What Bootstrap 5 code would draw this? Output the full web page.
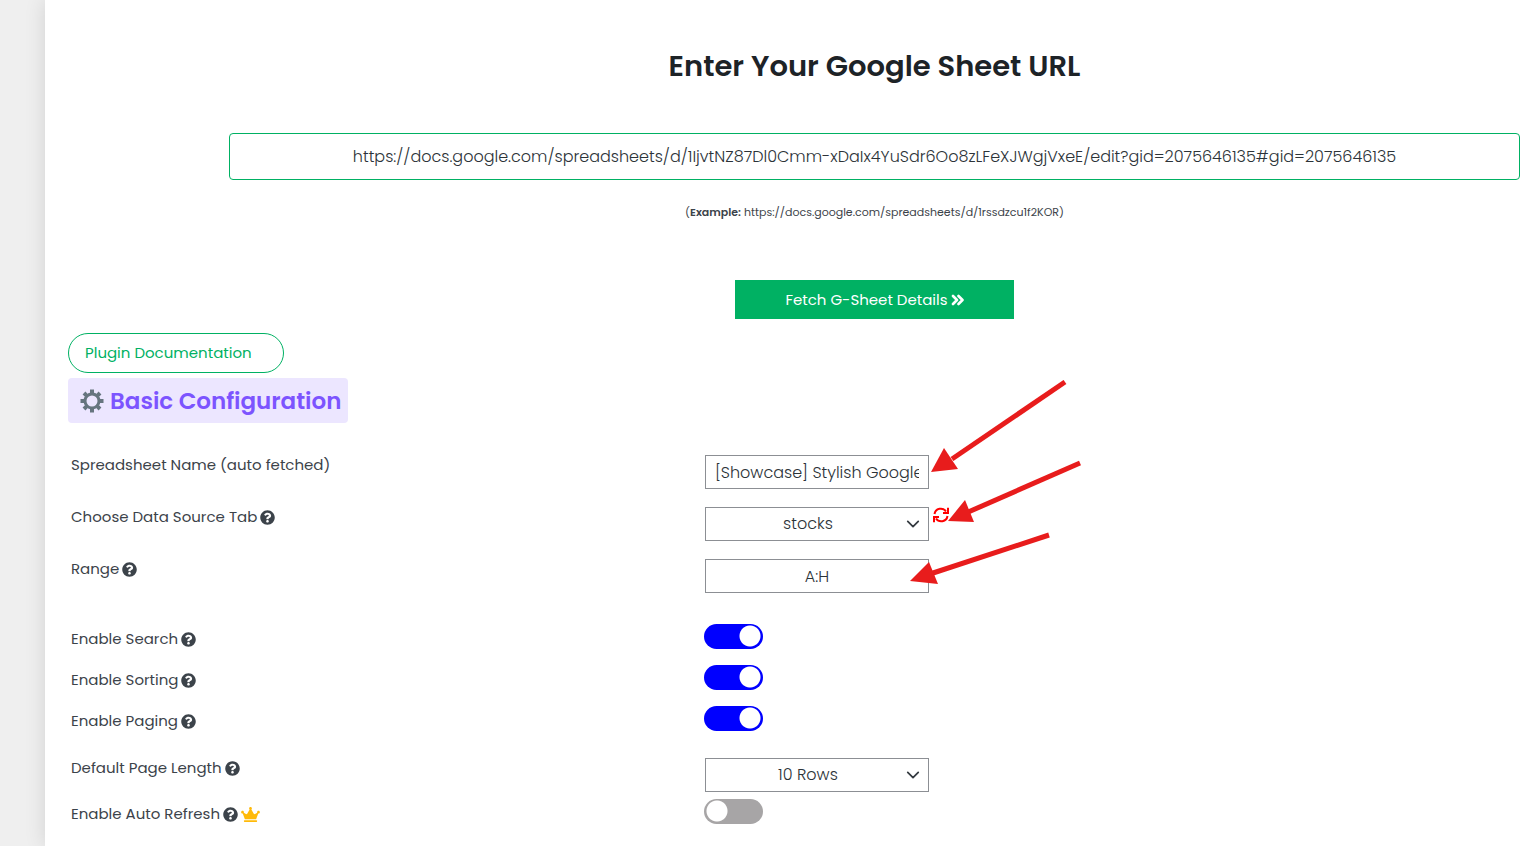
<!DOCTYPE html>
<html lang="en">
<head>
<meta charset="utf-8">
<meta name="viewport" content="width=device-width, initial-scale=1">
<title>Google Sheet settings</title>
<link href="https://cdn.jsdelivr.net/npm/bootstrap@5.3.0/dist/css/bootstrap.min.css" rel="stylesheet">
<style>
  body { font-family: Poppins, Inter, sans-serif; font-size: 15px; color: #3c434a; background: #efefef; }
  .settings-panel { margin-left: 45px; padding: 44px 5px 22px 23px; background: #fff; box-shadow: 0 0 20px rgba(0,0,0,.12); }
  .source-area { margin-left: 161px; }
  .source-title { font-size: 29px; line-height: 44px; font-weight: 600; color: #1d2327; margin-bottom: 45px; }
  .source-url { height: 47px; border: 1px solid #00b163; border-radius: 4px; font-size: 16px; font-weight: 300; color: #2c3338; margin-bottom: 22px; }
  .source-example { font-size: 11px; line-height: 20px; margin-bottom: 58px; }
  .fetch-btn { width: 279px; height: 39px; font-size: 15px; line-height: 20px; font-weight: 400; color: #fff; background: #00b163; border-radius: 0; gap: 3px; }
  .fetch-btn:hover { color: #fff; background: #009a56; }
  .docs-link { width: 216px; height: 40px; margin-top: 14px; padding-left: 16px; border: 1px solid #00b163; border-radius: 20px; color: #00b163; }
  .section-title { width: 280px; height: 45px; margin: 5px 0 32px; padding-left: 12px; gap: 6px; border-radius: 4px; background: #ece6ff; color: #7c54ff; font-size: 23px; line-height: 30px; font-weight: 600; }
  .setting { padding-left: 3px; }
  .setting-name { width: 43.75%; flex: none; line-height: 20px; gap: 3px; }
  .setting-name svg { width: 15px; height: 15px; }
  .setting-name .crown { width: 19px; height: 15px; }
  .setting .value-box { width: 224px; height: 34px; padding: 0 9px; border: 1px solid #8c8f94; border-radius: 0; font-size: 16px; font-weight: 300; line-height: 30px; color: #2c3338; background-color: #fff; }
  .setting select.value-box { padding: 0 26px 0 8px; text-align-last: center; background-position: right 8px center; background-size: 14px 14px; }
  .setting .toggle { appearance: none; width: 59px; height: 25px; margin: 0; margin-left: -1px; border: 0; border-radius: 13px; background: #a7a5a6 radial-gradient(circle at 13px 12px, #fff 10px, transparent 11px); }
  .setting .toggle:checked { background: #00f radial-gradient(circle at 46px 12px, #fff 10px, transparent 11px); }
  .name-toggle { padding-top: 5px; }
  .gap-fields { margin-bottom: 18px; }
  .gap-toggles { margin-bottom: 16px; }
  .gap-range { margin-bottom: 31px; }
  .gap-paging { margin-bottom: 27px; }
  .gap-small { margin-bottom: 7px; }
  .reload-btn { width: 16px; height: 16px; margin-left: 4px; }
  /* callout arrows drawn over the form */
  .callout { position: absolute; pointer-events: none; z-index: 2; fill: #e81c1c; stroke: #e81c1c; }
  .callout-name { left: 225px; top: -75px; }
  .callout-tab { left: 241px; top: -49px; }
  .callout-range { left: 205px; top: -28px; }
</style>
</head>
<body>
<svg class="d-none" aria-hidden="true">
  <symbol id="help" viewBox="0 0 512 512"><path fill="#3c434a" d="M504 256c0 136.997-111.043 248-248 248S8 392.997 8 256C8 119.083 119.043 8 256 8s248 111.083 248 248zM262.655 90c-54.497 0-89.255 22.957-116.549 63.758-3.536 5.286-2.353 12.415 2.715 16.258l34.699 26.31c5.205 3.947 12.621 3.008 16.665-2.122 17.864-22.658 30.113-35.797 57.303-35.797 20.429 0 45.698 13.148 45.698 32.958 0 14.976-12.363 22.667-32.534 33.976C247.128 238.528 216 254.941 216 296v4c0 6.627 5.373 12 12 12h56c6.627 0 12-5.373 12-12v-1.333c0-28.462 83.186-29.647 83.186-106.667 0-58.002-60.165-102-116.531-102zM256 338c-25.365 0-46 20.635-46 46 0 25.364 20.635 46 46 46s46-20.636 46-46c0-25.365-20.635-46-46-46z"/></symbol>
</svg>
<main class="settings-panel min-vh-100">
  <section class="source-area text-center">
    <h1 class="source-title"><label for="sheetUrl">Enter Your Google Sheet URL</label></h1>
    <input id="sheetUrl" type="text" class="form-control source-url text-center" value="https://docs.google.com/spreadsheets/d/1IjvtNZ87Dl0Cmm-xDaIx4YuSdr6Oo8zLFeXJWgjVxeE/edit?gid=2075646135#gid=2075646135">
    <p class="source-example">(<strong class="fw-semibold">Example:</strong> https://docs.google.com/spreadsheets/d/1rssdzcu1f2KOR)</p>
    <button type="button" class="btn fetch-btn d-inline-flex align-items-center justify-content-center p-0">Fetch G-Sheet Details
      <svg width="13" height="12" viewBox="0 0 13 12" fill="none" stroke="#fff" stroke-width="2.6" stroke-linecap="round" stroke-linejoin="round"><path d="M2 2l4 4-4 4M7.5 2l4 4-4 4"/></svg>
    </button>
  </section>

  <a href="#" class="docs-link d-flex align-items-center text-decoration-none">Plugin Documentation</a>
  <h2 class="section-title d-flex align-items-center">
    <svg width="24" height="24" viewBox="0 0 24 24" fill="none" stroke="#66757f"><circle cx="12" cy="12" r="7" stroke-width="3"/><g stroke-width="4"><path d="M12 .5v4M12 19.500v4M.5 12h4M19.500 12h4"/><path d="M4 4l2.600 2.600M17.400 17.400L20 20M4 20l2.600-2.600M17.400 6.600L20 4"/></g></svg>
    Basic Configuration
  </h2>

  <form>
    <div class="setting d-flex align-items-start gap-fields">
      <label for="sheetName" class="setting-name d-flex align-items-center">Spreadsheet Name (auto fetched)</label>
      <div class="position-relative">
        <input id="sheetName" type="text" class="form-control value-box" value="[Showcase] Stylish Google Sheet">
        <svg class="callout callout-name" width="140" height="95" viewBox="0 0 140 95"><path d="M135 2L22 79" stroke-width="5"/><path stroke="none" d="M1 92L14 68L28 89z"/></svg>
      </div>
    </div>
    <div class="setting d-flex align-items-start gap-fields">
      <label for="sourceTab" class="setting-name d-flex align-items-center">Choose Data Source Tab <svg><use href="#help"/></svg></label>
      <div class="position-relative d-flex align-items-start">
        <select id="sourceTab" class="form-select value-box"><option>stocks</option></select>
        <button type="button" class="reload-btn btn border-0 p-0 d-flex" aria-label="Reload tabs">
          <svg width="16" height="16" viewBox="0 0 16 16" fill="none" stroke="#f00" stroke-width="2"><path d="M1.500 7C2.500 1 10 0 13 4.500M14.500 9C13.500 15 6 16 3 11.500"/><path d="M15 .8v5.200h-5M1 15.200V10h5"/></svg>
        </button>
        <svg class="callout callout-tab" width="138" height="68" viewBox="0 0 138 68"><path d="M134 5L20 55" stroke-width="5"/><path stroke="none" d="M2 63L19 42L28 64z"/></svg>
      </div>
    </div>
    <div class="setting d-flex align-items-start gap-range">
      <label for="range" class="setting-name d-flex align-items-center">Range <svg><use href="#help"/></svg></label>
      <div class="position-relative">
        <input id="range" type="text" class="form-control value-box text-center" value="A:H">
        <svg class="callout callout-range" width="142" height="56" viewBox="0 0 142 56"><path d="M139 4L20 43" stroke-width="5"/><path stroke="none" d="M0 50L19 31L28 53z"/></svg>
      </div>
    </div>
    <div class="setting d-flex align-items-start gap-toggles">
      <label for="search" class="setting-name name-toggle d-flex align-items-center">Enable Search <svg><use href="#help"/></svg></label>
      <input id="search" type="checkbox" class="toggle" checked>
    </div>
    <div class="setting d-flex align-items-start gap-toggles">
      <label for="sorting" class="setting-name name-toggle d-flex align-items-center">Enable Sorting <svg><use href="#help"/></svg></label>
      <input id="sorting" type="checkbox" class="toggle" checked>
    </div>
    <div class="setting d-flex align-items-start gap-paging">
      <label for="paging" class="setting-name name-toggle d-flex align-items-center">Enable Paging <svg><use href="#help"/></svg></label>
      <input id="paging" type="checkbox" class="toggle" checked>
    </div>
    <div class="setting d-flex align-items-start gap-small">
      <label for="pageLength" class="setting-name d-flex align-items-center">Default Page Length <svg><use href="#help"/></svg></label>
      <select id="pageLength" class="form-select value-box"><option>10 Rows</option></select>
    </div>
    <div class="setting d-flex align-items-start">
      <label for="autoRefresh" class="setting-name name-toggle d-flex align-items-center">Enable Auto Refresh <svg><use href="#help"/></svg>
        <svg class="crown" viewBox="0 0 640 512" fill="#ffba0a"><path d="M528 448H112c-8.800 0-16 7.200-16 16v32c0 8.800 7.200 16 16 16h416c8.800 0 16-7.200 16-16v-32c0-8.800-7.200-16-16-16zm64-320c-26.500 0-48 21.500-48 48 0 7.100 1.600 13.700 4.400 19.800L476 239.200c-15.400 9.200-35.300 4-44.200-11.600L350.300 85C361 76.200 368 63 368 48c0-26.500-21.500-48-48-48s-48 21.500-48 48c0 15 7 28.200 17.700 37l-81.500 142.600c-8.900 15.600-28.900 20.800-44.200 11.600l-72.300-43.400c2.700-6 4.400-12.700 4.400-19.800 0-26.500-21.500-48-48-48S0 149.500 0 176s21.500 48 48 48c2.600 0 5.200-.4 7.700-.8L128 416h384l72.300-192.800c2.500.4 5.100.8 7.700.8 26.500 0 48-21.500 48-48s-21.500-48-48-48z"/></svg>
      </label>
      <input id="autoRefresh" type="checkbox" class="toggle">
    </div>
  </form>
</main>
<script src="https://cdn.jsdelivr.net/npm/bootstrap@5.3.0/dist/js/bootstrap.bundle.min.js"></script>
</body>
</html>
